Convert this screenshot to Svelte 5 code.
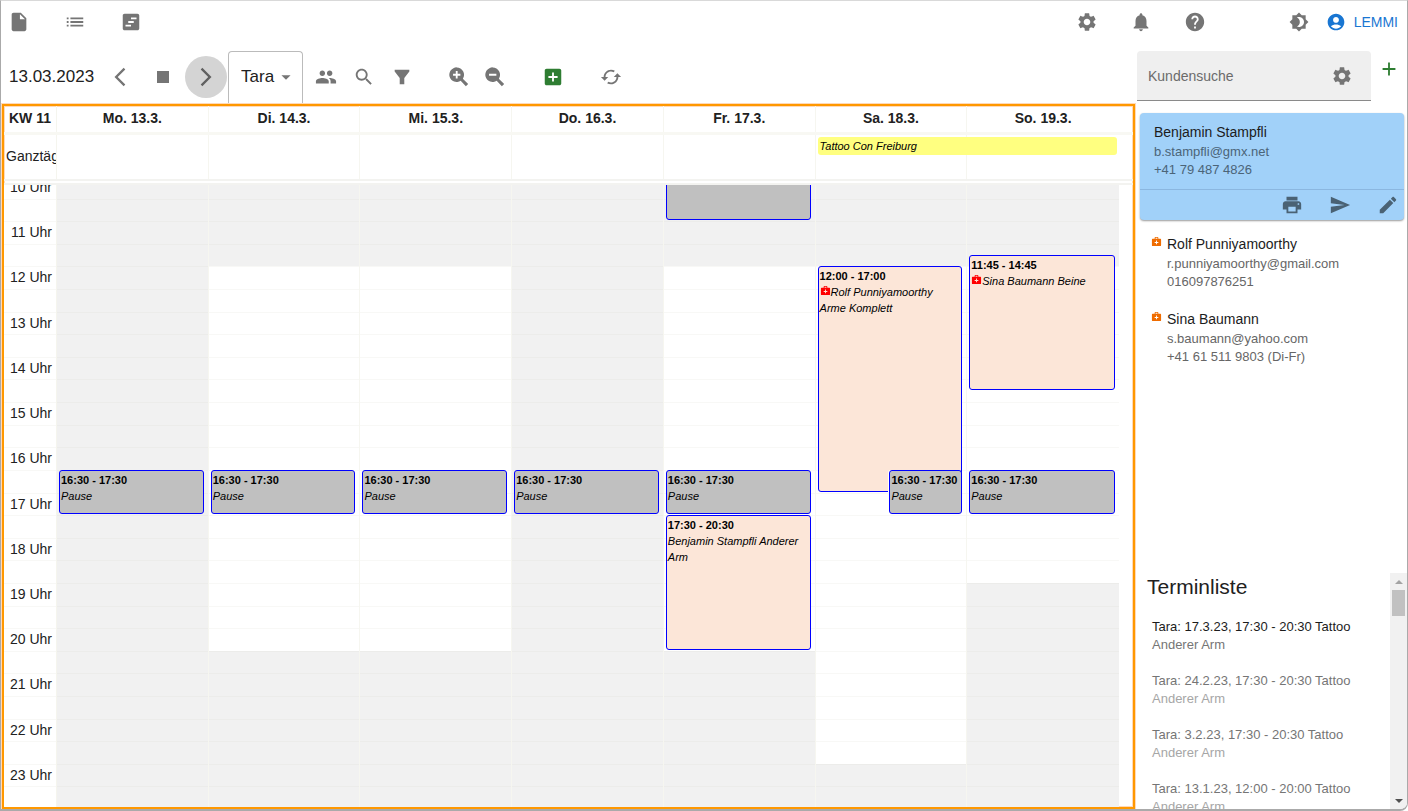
<script>
  const icons = {
    file: 'M6 2c-1.1 0-2 .9-2 2v16c0 1.1.89 2 2 2h12c1.1 0 2-.9 2-2V8l-6-6H6zm7 7V3.5L18.5 9H13z',
    list: 'M3 13h2v-2H3v2zm0 4h2v-2H3v2zm0-8h2V7H3v2zm4 4h14v-2H7v2zm0 4h14v-2H7v2zM7 7v2h14V7H7z',
    board: 'M19 3H5c-1.1 0-2 .9-2 2v14c0 1.1.9 2 2 2h14c1.1 0 2-.9 2-2V5c0-1.1-.9-2-2-2zm-7 14H6v-2h6v2zm3-4H9v-2h6v2zm3-4h-6V7h6v2z',
    settings: 'M19.14 12.94c.04-.3.06-.61.06-.94 0-.32-.02-.64-.07-.94l2.03-1.58c.18-.14.23-.41.12-.61l-1.92-3.32c-.12-.22-.37-.29-.59-.22l-2.39.96c-.5-.38-1.03-.7-1.62-.94l-.36-2.54c-.04-.24-.24-.41-.48-.41h-3.84c-.24 0-.43.17-.47.41l-.36 2.54c-.59.24-1.13.57-1.62.94l-2.39-.96c-.22-.08-.47 0-.59.22L2.74 8.87c-.12.21-.08.47.12.61l2.03 1.58c-.05.3-.09.63-.09.94s.02.64.07.94l-2.03 1.58c-.18.14-.23.41-.12.61l1.92 3.32c.12.22.37.29.59.22l2.39-.96c.5.38 1.03.7 1.62.94l.36 2.54c.05.24.24.41.48.41h3.84c.24 0 .44-.17.47-.41l.36-2.54c.59-.24 1.13-.56 1.62-.94l2.39.96c.22.08.47 0 .59-.22l1.92-3.32c.12-.22.07-.47-.12-.61l-2.01-1.58zM12 15.6c-1.98 0-3.6-1.62-3.6-3.6s1.62-3.6 3.6-3.6 3.6 1.62 3.6 3.6-1.62 3.6-3.6 3.6z',
    bell: 'M12 22c1.1 0 2-.9 2-2h-4c0 1.1.89 2 2 2zm6-6v-5c0-3.07-1.64-5.64-4.5-6.32V4c0-.83-.67-1.5-1.5-1.5s-1.5.67-1.5 1.5v.68C7.63 5.36 6 7.92 6 11v5l-2 2v1h16v-1l-2-2z',
    help: 'M12 2C6.48 2 2 6.48 2 12s4.48 10 10 10 10-4.48 10-10S17.52 2 12 2zm1 17h-2v-2h2v2zm2.07-7.75l-.9.92C13.45 12.9 13 13.5 13 15h-2v-.5c0-1.1.45-2.1 1.17-2.83l1.24-1.26c.37-.36.59-.86.59-1.41 0-1.1-.9-2-2-2s-2 .9-2 2H8c0-2.21 1.79-4 4-4s4 1.79 4 4c0 .88-.36 1.68-.93 2.25z',
    theme: 'M20 8.69V4h-4.69L12 .69 8.69 4H4v4.69L.69 12 4 15.31V20h4.69L12 23.31 15.31 20H20v-4.69L23.31 12 20 8.69zM12 18c-.89 0-1.74-.2-2.5-.55C11.56 16.5 13 14.42 13 12s-1.44-4.5-3.5-5.45C10.26 6.2 11.11 6 12 6c3.31 0 6 2.69 6 6s-2.69 6-6 6z',
    account: 'M12 2C6.48 2 2 6.48 2 12s4.48 10 10 10 10-4.48 10-10S17.52 2 12 2zm0 4c1.93 0 3.5 1.57 3.5 3.5S13.93 13 12 13s-3.5-1.57-3.5-3.5S10.07 6 12 6zm0 14c-2.03 0-4.43-.82-6.14-2.88C7.55 15.8 9.68 15 12 15s4.45.8 6.14 2.12C16.43 19.18 14.03 20 12 20z',
    prev: 'M17.77 3.77 16 2 6 12l10 10 1.77-1.77L9.54 12z',
    next: 'M6.23 20.23 8 22l10-10L8 2 6.23 3.77 14.46 12z',
    stop: 'M6 6h12v12H6z',
    caret: 'M7 10l5 5 5-5z',
    people: 'M16 11c1.66 0 2.99-1.34 2.99-3S17.66 5 16 5c-1.66 0-3 1.34-3 3s1.34 3 3 3zm-8 0c1.66 0 2.99-1.34 2.99-3S9.66 5 8 5C6.34 5 5 6.34 5 8s1.34 3 3 3zm0 2c-2.33 0-7 1.17-7 3.5V19h14v-2.5c0-2.33-4.67-3.5-7-3.5zm8 0c-.29 0-.62.02-.97.05 1.16.84 1.97 1.97 1.97 3.45V19h6v-2.5c0-2.33-4.67-3.5-7-3.5z',
    search: 'M15.5 14h-.79l-.28-.27C15.41 12.59 16 11.11 16 9.5 16 5.91 13.09 3 9.5 3S3 5.91 3 9.5 5.91 16 9.5 16c1.61 0 3.09-.59 4.23-1.57l.27.28v.79l5 4.99L20.49 19l-4.99-5zm-6 0C7.01 14 5 11.99 5 9.5S7.01 5 9.5 5 14 7.01 14 9.5 11.99 14 9.5 14z',
    filter: 'M4 4h16v2l-5.5 7v7h-5v-7L4 6z',
    zoomIn: 'M9.5 1.5a8 8 0 1 0 4.3 14.7l5.7 5.8 2.5-2.5-5.8-5.7A8 8 0 0 0 9.5 1.5zm1 9v3h-2v-3h-3v-2h3v-3h2v3h3v2z',
    zoomOut: 'M9.5 1.5a8 8 0 1 0 4.3 14.7l5.7 5.8 2.5-2.5-5.8-5.7A8 8 0 0 0 9.5 1.5zm4 9h-8v-2h8z',
    addBox: 'M19 3H5c-1.11 0-2 .9-2 2v14c0 1.1.89 2 2 2h14c1.1 0 2-.9 2-2V5c0-1.1-.9-2-2-2zm-2 10h-4v4h-2v-4H7v-2h4V7h2v4h4v2z',
    refresh: 'M19 8l-4 4h3c0 3.31-2.69 6-6 6-1.01 0-1.97-.25-2.8-.7l-1.46 1.46C8.97 19.54 10.43 20 12 20c4.42 0 8-3.58 8-8h3l-4-4zM6 12c0-3.31 2.69-6 6-6 1.01 0 1.97.25 2.8.7l1.46-1.46C15.03 4.46 13.57 4 12 4c-4.42 0-8 3.58-8 8H1l4 4 4-4H6z',
    plus: 'M19 13h-6v6h-2v-6H5v-2h6V5h2v6h6v2z',
    print: 'M19 8H5c-1.66 0-3 1.34-3 3v6h4v4h12v-4h4v-6c0-1.66-1.34-3-3-3zm-3 11H8v-5h8v5zm3-7c-.55 0-1-.45-1-1s.45-1 1-1 1 .45 1 1-.45 1-1 1zm-1-9H6v4h12V3z',
    send: 'M2.01 21L23 12 2.01 3 2 10l15 2-15 2z',
    edit: 'M3 17.25V21h3.75L17.81 9.94l-3.75-3.75L3 17.25zM20.71 7.04c.39-.39.39-1.02 0-1.41l-2.34-2.34c-.39-.39-1.02-.39-1.41 0l-1.83 1.83 3.75 3.75 1.83-1.83z',
    medical: 'M20 6h-4V4c0-1.1-.9-2-2-2h-4c-1.1 0-2 .9-2 2v2H4c-1.1 0-2 .9-2 2v12c0 1.1.9 2 2 2h16c1.1 0 2-.9 2-2V8c0-1.1-.9-2-2-2zM10 4h4v2h-4V4zm6 11h-3v3h-2v-3H8v-2h3v-3h2v3h3v2z'
  };

  // The visible part of the day; every hour is made of four grid rows.
  const firstHour = 10;
  const lastHour = 24;
  const hours = Array.from({ length: lastHour - firstHour }, (_, i) => firstHour + i);
  const halfHours = Array.from({ length: (lastHour - firstHour) * 2 }, (_, i) => firstHour + i / 2);
  const row = (hour) => (hour - firstHour) * 4 + 1;

  const pause = { from: 16.5, to: 17.5, time: '16:30 - 17:30', text: 'Pause', kind: 'pause' };
  const days = [
    { name: 'Mo. 13.3.', open: null, events: [pause] },
    { name: 'Di. 14.3.', open: [12, 20.5], events: [pause] },
    { name: 'Mi. 15.3.', open: [12, 20.5], events: [pause] },
    { name: 'Do. 16.3.', open: null, events: [pause] },
    {
      name: 'Fr. 17.3.',
      open: [12, 20.5],
      events: [
        { from: 10, to: 11, kind: 'pause' },
        pause,
        { from: 17.5, to: 20.5, time: '17:30 - 20:30', text: 'Benjamin Stampfli Anderer Arm', kind: 'booking' }
      ]
    },
    {
      name: 'Sa. 18.3.',
      open: [12, 23],
      events: [
        { from: 12, to: 17, time: '12:00 - 17:00', text: 'Rolf Punniyamoorthy Arme Komplett', kind: 'booking', medical: true },
        { ...pause, half: true }
      ]
    },
    {
      name: 'So. 19.3.',
      open: [12, 19],
      events: [{ from: 11.75, to: 14.75, time: '11:45 - 14:45', text: 'Sina Baumann Beine', kind: 'booking', medical: true }, pause]
    }
  ];
  const isOpen = (day, h) => day.open && h >= day.open[0] && h < day.open[1];

  const customers = [
    { name: 'Rolf Punniyamoorthy', mail: 'r.punniyamoorthy@gmail.com', phone: '016097876251' },
    { name: 'Sina Baumann', mail: 's.baumann@yahoo.com', phone: '+41 61 511 9803 (Di-Fr)' }
  ];
  const appointments = [
    { when: 'Tara: 17.3.23, 17:30 - 20:30 Tattoo', what: 'Anderer Arm' },
    { when: 'Tara: 24.2.23, 17:30 - 20:30 Tattoo', what: 'Anderer Arm', past: true },
    { when: 'Tara: 3.2.23, 17:30 - 20:30 Tattoo', what: 'Anderer Arm', past: true },
    { when: 'Tara: 13.1.23, 12:00 - 20:00 Tattoo', what: 'Anderer Arm', past: true }
  ];
</script>

{#snippet icon(name, size = 22)}
  <svg width={size} height={size} viewBox="0 0 24 24" aria-hidden="true"><path fill="currentColor" fill-rule="evenodd" d={icons[name]} /></svg>
{/snippet}

<div class="app">
  <header class="appbar">
    <nav class="group pages">
      <button aria-label="Dokument">{@render icon('file')}</button>
      <button aria-label="Liste">{@render icon('list')}</button>
      <button aria-label="Planung">{@render icon('board')}</button>
    </nav>
    <div class="group tools">
      <button aria-label="Einstellungen">{@render icon('settings')}</button>
      <button aria-label="Mitteilungen">{@render icon('bell')}</button>
      <button aria-label="Hilfe">{@render icon('help')}</button>
    </div>
    <div class="group account">
      <button aria-label="Farbschema">{@render icon('theme', 20)}</button>
      <button class="user">{@render icon('account', 20)}<span>LEMMI</span></button>
    </div>
  </header>

  <div class="body">
    <main>
      <div class="toolbar">
        <span class="date">13.03.2023</span>
        <div class="group steps">
          <button class="round" aria-label="Zurück">{@render icon('prev')}</button>
          <button class="round" aria-label="Heute">{@render icon('stop', 24)}</button>
          <button class="round active" aria-label="Weiter">{@render icon('next')}</button>
        </div>
        <label class="person">
          <select aria-label="Mitarbeiter"><option>Tara</option></select>
          {@render icon('caret')}
        </label>
        <div class="group filters">
          <button aria-label="Team">{@render icon('people')}</button>
          <button aria-label="Suchen">{@render icon('search')}</button>
          <button aria-label="Filtern">{@render icon('filter')}</button>
        </div>
        <div class="group zooms">
          <button aria-label="Vergrössern">{@render icon('zoomIn')}</button>
          <button aria-label="Verkleinern">{@render icon('zoomOut')}</button>
        </div>
        <button class="add" aria-label="Neuer Termin">{@render icon('addBox')}</button>
        <button aria-label="Aktualisieren">{@render icon('refresh')}</button>
      </div>

      <section class="calendar">
        <div class="week names">
          <div class="gutter">KW 11</div>
          {#each days as day}<div class="cell">{day.name}</div>{/each}
        </div>
        <div class="week allday">
          <div class="gutter">Ganztägig</div>
          {#each days as day, i}<div class="cell" style:grid-column={i + 2}></div>{/each}
          <p class="banner">Tattoo Con Freiburg</p>
        </div>
        <div class="scroll">
          <div class="week times">
            <div class="gutter hours">
              {#each hours as h}
                <div class="slot" style:grid-row="{row(h)} / span 2">{h} Uhr</div>
                <div class="slot" style:grid-row="{row(h) + 2} / span 2"></div>
              {/each}
            </div>
            {#each days as day}
              <div class="day">
                {#each halfHours as h}
                  <div class="slot" class:open={isOpen(day, h)} style:grid-row="{row(h)} / span 2"></div>
                {/each}
                {#each day.events as e}
                  <article class="event {e.kind}" class:half={e.half} style:grid-row="{row(e.from)} / {row(e.to)}">
                    {#if e.time}
                      <strong>{e.time}</strong>
                      <p>{#if e.medical}{@render icon('medical', 11)}{/if}{e.text}</p>
                    {/if}
                  </article>
                {/each}
              </div>
            {/each}
          </div>
        </div>
      </section>
    </main>

    <aside>
      <div class="find">
        <div class="field">
          <input type="text" placeholder="Kundensuche" aria-label="Kundensuche" />
          <button aria-label="Sucheinstellungen">{@render icon('settings')}</button>
        </div>
        <button class="new" aria-label="Neuer Kunde">{@render icon('plus')}</button>
      </div>

      <div class="customers">
        <div class="selected">
          <div class="info">
            <h3>Benjamin Stampfli</h3>
            <p>b.stampfli@gmx.net</p>
            <p>+41 79 487 4826</p>
          </div>
          <div class="actions">
            <button aria-label="Drucken">{@render icon('print')}</button>
            <button aria-label="Senden">{@render icon('send')}</button>
            <button aria-label="Bearbeiten">{@render icon('edit')}</button>
          </div>
        </div>
        {#each customers as c}
          <div class="customer">
            {@render icon('medical', 11)}
            <div>
              <h3>{c.name}</h3>
              <p>{c.mail}</p>
              <p>{c.phone}</p>
            </div>
          </div>
        {/each}
      </div>

      <div class="history">
        <div class="entries">
          <h2>Terminliste</h2>
          {#each appointments as a}
            <div class="entry" class:past={a.past}>
              <div>{a.when}</div>
              <p>{a.what}</p>
            </div>
          {/each}
        </div>
        <div class="scrollbar" aria-hidden="true">
          <i class="up"></i><i class="thumb"></i><i class="down"></i>
        </div>
      </div>
    </aside>
  </div>
</div>

<style>
  :global(body) { background: #fff; }
  .app, .app * { box-sizing: border-box; }
  .app {
    display: flex;
    flex-direction: column;
    height: 100vh;
    overflow: hidden;
    border: solid #aaa;
    border-width: 1px 1px 2px;
    border-top-color: #d9d9d9;
    border-bottom-right-radius: 8px;
    font-family: "Liberation Sans", Arial, sans-serif;
    font-size: 14px;
    color: #212121;
  }
  h2, h3, p { margin: 0; font-weight: 400; }
  button {
    display: flex;
    align-items: center;
    padding: 0;
    border: 0;
    background: none;
    font: inherit;
    color: #757575;
  }
  svg { display: block; flex: none; }
  .group { display: flex; align-items: center; }

  .appbar { display: flex; align-items: center; height: 42px; padding: 0 9px 0 7px; }
  .pages { gap: 34px; }
  .tools { gap: 32px; margin-left: auto; }
  .account { gap: 17px; margin-left: 83px; }
  .user { gap: 8px; color: #1976d2; }

  .body { display: flex; flex: 1; min-height: 0; }
  main { display: flex; flex: 1; flex-direction: column; min-width: 0; }

  .toolbar { display: flex; align-items: center; height: 60px; padding: 8px 0 0 8px; }
  .date { font-size: 17px; margin-right: 5px; }
  .steps { gap: 1px; margin-right: 1px; }
  .round { justify-content: center; width: 42px; height: 42px; border-radius: 50%; }
  .round.active { background: #d4d4d4; color: #616161; }
  .person {
    display: flex;
    align-items: center;
    align-self: stretch;
    padding: 0 5px 2px 12px;
    border: 1px solid #bbb;
    border-bottom: 0;
    border-radius: 4px 4px 0 0;
    color: #757575;
  }
  .person select {
    appearance: none;
    padding: 0;
    border: 0;
    background: none;
    font: inherit;
    font-size: 17px;
    color: #212121;
  }
  .filters { gap: 16px; margin: 0 35px 0 12px; }
  .zooms { gap: 14px; }
  .add { margin: 0 36px; color: #2e7d32; }

  .calendar {
    display: flex;
    flex: 1;
    flex-direction: column;
    min-height: 0;
    margin: 1px 1px 0;
    border: 2px solid #ff9800;
    box-shadow: 0 0 0 1px #ffd9b8, inset 0 0 0 1px #ffd9b8;
  }
  .week { display: grid; grid-template-columns: 53px repeat(7, 1fr); padding-right: 14px; }
  .gutter { border-right: 1px solid #f5f5ee; }
  .names { height: 29px; border-bottom: 3px solid #f8f8f3; font-weight: 700; line-height: 25px; text-align: center; }
  .cell, .day { border-right: 1px solid #f6f6f0; }
  .cell:last-of-type, .day:last-of-type { border-right: 0; }
  .allday { height: 50px; border-bottom: 6px double #f3f3f0; }
  .allday .gutter { grid-row: 1; padding-left: 2px; overflow: hidden; line-height: 43px; }
  .allday .cell { grid-row: 1; }
  .banner {
    grid-area: 1 / 7 / 2 / 9;
    height: 18px;
    margin: 2px 2px 0;
    padding-left: 2px;
    border-radius: 3px;
    background: #ffff80;
    color: #000;
    font-size: 11px;
    font-style: italic;
    line-height: 18px;
  }
  .scroll { flex: 1; min-height: 0; overflow: hidden; }
  .times { height: 633px; margin-top: -9px; }
  .hours, .day { display: grid; grid-template-rows: repeat(56, minmax(0, 1fr)); grid-template-columns: minmax(0, 1fr); }
  .slot { grid-column: 1; border-top: 1px solid #ececea; background: #f1f1f1; }
  .slot.open, .hours .slot { border-color: #f8f8f6; background: #fff; }
  .hours .slot { padding-right: 4px; line-height: 21px; text-align: right; }
  .event {
    z-index: 1;
    grid-column: 1;
    min-height: 0;
    margin: 0 4px 1px 2px;
    padding: 1px;
    overflow: hidden;
    border: 1px solid #00f;
    border-radius: 3px;
    color: #000;
    font-size: 11px;
    line-height: 16px;
  }
  .event strong { display: block; white-space: nowrap; }
  .event p { font-style: italic; }
  .event svg { display: inline-block; color: #f00; }
  .pause { background: silver; }
  .booking { background: #fce6d8; }
  .half { margin-left: 49%; box-shadow: -1px 0 #fff; }

  aside { display: flex; flex-direction: column; width: 271px; }
  .find { display: flex; gap: 7px; padding: 8px 7px 0 1px; }
  .field {
    display: flex;
    flex: 1;
    align-items: center;
    height: 50px;
    padding: 0 18px 0 11px;
    border-bottom: 1px solid #8a8a8a;
    border-radius: 4px 4px 0 0;
    background: #efefef;
  }
  .field input { flex: 1; min-width: 0; padding: 0; border: 0; outline: 0; background: none; font: inherit; }
  .field input::placeholder { color: #6b6b6b; opacity: 1; }
  .new { align-self: flex-start; padding-top: 7px; color: #2e7d32; }

  .customers { flex: 1; padding: 12px 3px 0 4px; }
  .customers h3 { font-size: 14px; line-height: 22px; color: #1c1c1c; }
  .customers p { font-size: 13px; line-height: 18px; color: #666; }
  .selected { border-radius: 4px; background: #a1d1f9; box-shadow: 0 1px 2px #0006; }
  .selected .info { height: 77px; padding: 8px 14px 0; border-bottom: 1px solid #8bb7e0; }
  .customers .selected p { color: #4b6478; }
  .actions { display: flex; justify-content: flex-end; gap: 26px; height: 30px; padding-right: 5px; }
  .actions button { color: #4a6274; }
  .customer { display: flex; gap: 5px; padding: 0 11px; margin-top: 17px; }
  .selected + .customer { margin-top: 13px; }
  .customer svg { margin-top: 3px; color: #ef6c00; }

  .history { display: flex; height: 236px; }
  .entries { flex: 1; padding: 1px 0 0 16px; overflow: hidden; font-size: 13px; line-height: 18px; }
  .entries h2 { margin: 0 0 18px -5px; font-size: 21px; line-height: 26px; }
  .entry { margin-bottom: 18px; color: #1c1c1c; }
  .entry p { color: #757575; }
  .past { color: #757575; }
  .past p { color: #a6a6a6; }
  .scrollbar { display: flex; flex-direction: column; align-items: center; width: 17px; padding: 7px 0 6px; background: #f1f1f1; }
  .scrollbar i { display: block; border: solid transparent; border-width: 0 4px; }
  .scrollbar .up { border-bottom: 4px solid #a3a3a3; }
  .scrollbar .thumb { width: 13px; height: 26px; margin: 6px 0 auto; border: 0; background: #c1c1c1; }
  .scrollbar .down { border-top: 4px solid #505050; }
</style>
